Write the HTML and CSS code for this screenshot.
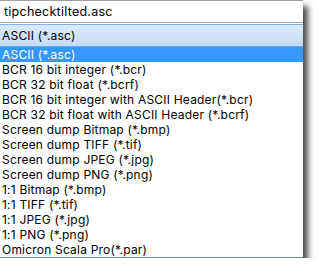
FILE: index.html
```html
<!DOCTYPE html>
<html lang="en">
<head>
    <meta charset="UTF-8">
    <title>File type list</title>
    <link rel="stylesheet" href="styles.css">
</head>
<body>
    <div class="panel">
        <div class="name-field">tipchecktilted.asc</div>
        <div class="combo">
            <div class="combo-field">ASCII (*.asc)</div>
        </div>
        <ul class="type-list">
            <li class="selected">ASCII (*.asc)</li>
            <li>BCR 16 bit integer (*.bcr)</li>
            <li>BCR 32 bit float (*.bcrf)</li>
            <li>BCR 16 bit integer with ASCII Header(*.bcr)</li>
            <li>BCR 32 bit float with ASCII Header (*.bcrf)</li>
            <li>Screen dump Bitmap (*.bmp)</li>
            <li>Screen dump TIFF (*.tif)</li>
            <li>Screen dump JPEG (*.jpg)</li>
            <li>Screen dump PNG (*.png)</li>
            <li>1:1 Bitmap (*.bmp)</li>
            <li>1:1 TIFF (*.tif)</li>
            <li>1:1 JPEG (*.jpg)</li>
            <li>1:1 PNG (*.png)</li>
            <li>Omicron Scala Pro(*.par)</li>
        </ul>
    </div>
</body>
</html>
```

FILE: styles.css
```css
body {
    margin: 0;
    padding: 0;
    background-color: #fff;
    font-family: Inter, "Open Sans", sans-serif;
    font-size: 12px;
    letter-spacing: 0.2px;
    color: #000;
}
.panel {
    width: 303px;
    background-color: #fff;
    box-shadow: 5px 6px 6px rgba(0, 0, 0, 0.7);
}
.name-field {
    border-top: 1px solid #a0a0a0;
    height: 21px;
    line-height: 21px;
    padding-left: 4px;
    font-size: 12.5px;
    letter-spacing: 0.25px;
}
.combo {
    border-top: 1px solid #acacac;
    padding-top: 1px;
}
.combo-field {
    height: 21px;
    line-height: 21px;
    padding-left: 2px;
    border-top: 1px solid #7eb4ea;
    border-bottom: 1px solid #6ea6e2;
    background: linear-gradient(#dcebfc, #c3dcf5);
}
.type-list {
    list-style-type: none;
    margin: 0;
    padding: 0;
    border-bottom: 1px solid #6d8db0;
    box-shadow: 0 1px 0 #6e5a2c;
}
.type-list li {
    height: 15px;
    line-height: 15px;
    padding-left: 2px;
    white-space: nowrap;
}
.type-list li.selected {
    background-color: #3399ff;
    color: #fff;
}
```
